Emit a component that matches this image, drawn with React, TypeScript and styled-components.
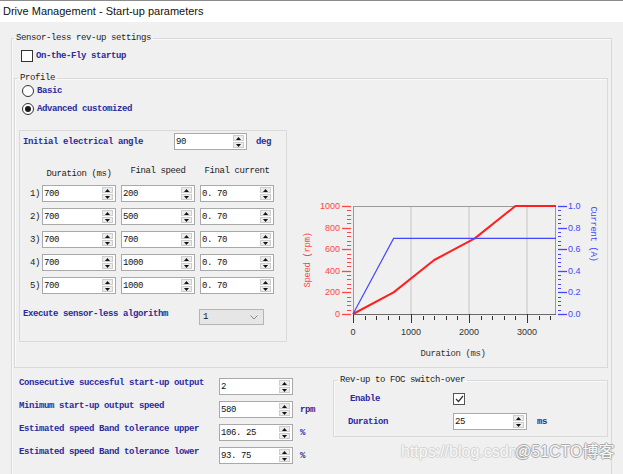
import React from "react";
import styled, { createGlobalStyle, css } from "styled-components";

///// CONSTANTS
const MONO = `"Liberation Mono", "DejaVu Sans Mono", monospace`;
const SANS = `"Liberation Sans", Arial, sans-serif`;
const BLUE = "#2b2b9e";
const INK = "#1c1c1c";
const ETCH = "#d9d9d9";
////////////

const GlobalStyle = createGlobalStyle`
  html, body {
    margin: 0;
    padding: 0;
    background: #f0f0f0;
  }
  #root {
    width: 623px;
    height: 474px;
    overflow: hidden;
  }
`;

const Window = styled.div`
  position: relative;
  width: 623px;
  height: 474px;
  overflow: hidden;
  background: #f0f0f0;
  font-family: ${MONO};
  font-size: 9px;
  letter-spacing: -0.4px;
  color: ${INK};
`;

const TitleBar = styled.div`
  height: 21px;
  border-top: 1px solid #8c8c8c;
  background: #fff;
  padding-left: 3px;
  font-family: ${SANS};
  font-size: 11px;
  letter-spacing: 0;
  line-height: 21px;
  color: #111;
`;

const groupBox = css`
  box-sizing: border-box;
  min-width: 0;
  margin: 0;
  padding: 0;
  border: 1px solid ${ETCH};
  box-shadow: inset 1px 1px 0 #fafafa;
`;

const Legend = styled.legend<{ $indent: number }>`
  margin-left: ${p => p.$indent}px;
  padding: 0 2px;
  height: 12px;
  line-height: 12px;
  color: ${INK};
`;

const OuterGroup = styled.fieldset`
  ${groupBox}
  margin: 10px 0 0 11px;
  width: 601px;
  min-height: 470px;
`;

const ProfileGroup = styled.fieldset`
  ${groupBox}
  margin: 10px 3px 0 2px;
  padding-bottom: 5px;
`;

const SwitchGroup = styled.fieldset`
  ${groupBox}
  margin: 6px 0 0 auto;
  width: 275px;
  padding: 7px 0 6px 0;
`;

const BlueText = styled.span`
  color: ${BLUE};
  font-weight: bold;
  line-height: 10px;
  white-space: pre;
`;

const CheckRow = styled.label`
  display: flex;
  align-items: center;
  gap: 3px;
  height: 12px;
  margin: 6px 0 0 9px;
`;

const Box = styled.span<{ $shade?: string }>`
  display: inline-flex;
  align-items: center;
  justify-content: center;
  flex: none;
  width: 12px;
  height: 12px;
  box-sizing: border-box;
  border: 1px solid ${p => p.$shade ?? "#333"};
  background: #fff;
`;

const RadioRow = styled.label<{ $top: number }>`
  display: flex;
  align-items: center;
  gap: 3px;
  height: 12px;
  margin: ${p => p.$top}px 0 0 7px;
`;

const RadioCircle = styled.span<{ $on?: boolean }>`
  display: inline-flex;
  align-items: center;
  justify-content: center;
  flex: none;
  width: 12px;
  height: 12px;
  box-sizing: border-box;
  border: 1px solid #333;
  border-radius: 50%;
  background: #fff;
  &::after {
    content: "";
    display: ${p => (p.$on ? "block" : "none")};
    width: 6px;
    height: 6px;
    border-radius: 50%;
    background: #1a1a1a;
  }
`;

const ContentRow = styled.div`
  display: flex;
  align-items: flex-start;
  margin: 15px 0 0 4px;
`;

const TableGroup = styled.div`
  flex: none;
  width: 268px;
  height: 212px;
  box-sizing: border-box;
  border: 1px solid ${ETCH};
  padding-top: 2px;
`;

const AngleRow = styled.div`
  display: flex;
  align-items: center;
  height: 17px;
`;

const FieldLabel = styled(BlueText)<{ $w: number; $pad?: number }>`
  flex: none;
  box-sizing: border-box;
  width: ${p => p.$w}px;
  padding-left: ${p => p.$pad ?? 0}px;
`;

const Unit = styled(BlueText)<{ $gap: number }>`
  margin-left: ${p => p.$gap}px;
`;

const StepGrid = styled.div`
  display: grid;
  grid-template-columns: 22px 79px 79px 74px;
  grid-auto-rows: 17px;
  grid-template-rows: 15px;
  row-gap: 6px;
  margin-top: 14px;
`;

const ColHead = styled.span<{ $low?: boolean }>`
  width: 74px;
  text-align: center;
  line-height: 10px;
  white-space: pre;
  align-self: ${p => (p.$low ? "end" : "start")};
  padding-top: ${p => (p.$low ? 0 : 2)}px;
`;

const RowNum = styled.span`
  align-self: center;
  text-align: right;
  padding-right: 2px;
  line-height: 10px;
`;

const ExecuteRow = styled.div`
  display: flex;
  align-items: flex-start;
  margin-top: 15px;
`;

const SelectBox = styled.div`
  display: flex;
  align-items: center;
  justify-content: space-between;
  width: 65px;
  height: 16px;
  box-sizing: border-box;
  border: 1px solid #b4b4b4;
  background: #e6e6e6;
  padding: 0 5px 0 3px;
  color: #111;
`;

const Field = styled.div<{ $w: number; $h?: number }>`
  display: flex;
  flex: none;
  width: ${p => p.$w}px;
  height: ${p => p.$h ?? 17}px;
  box-sizing: border-box;
  border: 1px solid #a9a9a9;
  background: #fff;
`;

const FieldValue = styled.span`
  flex: 1;
  padding-left: 1px;
  display: flex;
  align-items: center;
  color: #111;
  white-space: pre;
`;

const Spinner = styled.span`
  display: flex;
  flex-direction: column;
  gap: 1px;
  width: 11px;
  margin: 1px 2px 1px 0;
`;

const SpinButton = styled.span`
  flex: 1;
  display: flex;
  align-items: center;
  justify-content: center;
  background: #ececec;
  border: 1px solid #cdcdcd;
`;

const ChartSvg = styled.svg`
  flex: none;
  margin-left: 6px;
  font-family: ${SANS};
  font-size: 9px;
  letter-spacing: 0;
  .title {
    font-family: ${MONO};
    letter-spacing: -0.4px;
  }
`;

const BottomRow = styled.div`
  display: flex;
  align-items: flex-start;
  margin: 0 3px 0 7px;
`;

const ParamList = styled.div`
  display: flex;
  flex-direction: column;
  gap: 6px;
  margin-top: 10px;
`;

const ParamRow = styled.div`
  display: flex;
  align-items: flex-start;
  height: 17px;
  ${Unit} {
    align-self: center;
  }
`;

const SwitchRow = styled.div<{ $top?: number }>`
  display: flex;
  align-items: center;
  margin-top: ${p => p.$top ?? 0}px;
`;

const Watermark = styled.div`
  position: absolute;
  left: 401px;
  top: 441px;
  width: 222px;
  height: 24px;
  font-family: ${SANS}, "Noto Sans CJK SC", sans-serif;
  letter-spacing: 0;
  pointer-events: none;
`;

const MarkText = styled.span<{ $x: number; $edge: string }>`
  position: absolute;
  left: ${p => p.$x}px;
  top: 0;
  font-size: 16px;
  line-height: 22px;
  white-space: nowrap;
  color: #f7f7f7;
  text-shadow: -1px 0 ${p => p.$edge}, 1px 0 ${p => p.$edge},
    0 -1px ${p => p.$edge}, 0 1px ${p => p.$edge};
`;

///// PIECES
const Arrow = ({ up }: { up?: boolean }) => (
  <svg width="5" height="3" viewBox="0 0 5 3">
    <polygon points={up ? "2.5,0 5,3 0,3" : "0,0 5,0 2.5,3"} fill="#111" />
  </svg>
);

const SpinBox = ({ value, w = 74, h }: { value: string; w?: number; h?: number }) => (
  <Field $w={w} $h={h}>
    <FieldValue>{value}</FieldValue>
    <Spinner>
      <SpinButton>
        <Arrow up />
      </SpinButton>
      <SpinButton>
        <Arrow />
      </SpinButton>
    </Spinner>
  </Field>
);

const steps = [
  { dur: "700", speed: "200", current: "0. 70" },
  { dur: "700", speed: "500", current: "0. 70" },
  { dur: "700", speed: "700", current: "0. 70" },
  { dur: "700", speed: "1000", current: "0. 70" },
  { dur: "700", speed: "1000", current: "0. 70" },
];

const PX0 = 60;
const PY0 = 184;
const PX1 = 263;
const PY1 = 76;
const xOf = (ms: number) => PX0 + ms * 0.058;
const ySpeed = (v: number) => PY0 - v * 0.108;
const yCur = (c: number) => PY0 - c * 108;

const speedPts = [
  [0, 0],
  [700, 200],
  [1400, 500],
  [2100, 700],
  [2800, 1000],
  [3500, 1000],
]
  .map(([t, v]) => `${xOf(t)},${ySpeed(v)}`)
  .join(" ");

const currentPts = [
  [0, 0],
  [700, 0.7],
  [3500, 0.7],
]
  .map(([t, c]) => `${xOf(t)},${yCur(c)}`)
  .join(" ");

const RED = "#ff4646";
const CUR = "#4646ff";

const RampChart = () => {
  const ticks26 = Array.from({ length: 26 }, (_, i) => i);
  const xticks = Array.from({ length: 18 }, (_, i) => i);
  return (
    <ChartSvg width="310" height="232" viewBox="0 0 310 232">
      {[1000, 2000, 3000].map(ms => (
        <line key={ms} x1={xOf(ms)} y1={PY1} x2={xOf(ms)} y2={PY0} stroke="#c6c6c6" />
      ))}
      <line x1={PX0} y1={PY1 + 0.5} x2={PX1} y2={PY1 + 0.5} stroke="#9a9a9a" />
      <line x1={PX1 - 0.5} y1={PY1} x2={PX1 - 0.5} y2={PY0} stroke="#9a9a9a" />
      <line x1={PX0 + 0.5} y1={PY1} x2={PX0 + 0.5} y2={PY0} stroke="#9a9a9a" />
      <line x1={PX0} y1={PY0 + 0.5} x2={PX1} y2={PY0 + 0.5} stroke="#6a6a6a" />

      {ticks26.map(i => {
        const y = Math.round(ySpeed(i * 40)) + 0.5;
        const major = i % 5 === 0;
        return (
          <line key={"l" + i} x1={major ? 49 : 54} y1={y} x2={58} y2={y} stroke={RED} strokeWidth={major ? 1.3 : 1} />
        );
      })}
      {ticks26.map(i => {
        const y = Math.round(yCur(i * 0.04)) + 0.5;
        const major = i % 5 === 0;
        return (
          <line key={"r" + i} x1={265} y1={y} x2={major ? 274 : 268} y2={y} stroke={CUR} strokeWidth={major ? 1.3 : 1} />
        );
      })}
      {xticks.map(i => {
        const x = Math.round(xOf(i * 200)) + 0.5;
        const major = i % 5 === 0;
        return (
          <line key={"x" + i} x1={x} y1={major ? 184 : 186} x2={x} y2={major ? 193 : 190} stroke="#333" />
        );
      })}

      {[0, 200, 400, 600, 800, 1000].map(v => (
        <text key={"sl" + v} x={47} y={ySpeed(v) + 3} textAnchor="end" fill={RED}>
          {v}
        </text>
      ))}
      {[0, 0.2, 0.4, 0.6, 0.8, 1].map(c => (
        <text key={"cl" + c} x={275} y={yCur(c) + 3} fill={CUR}>
          {c.toFixed(1)}
        </text>
      ))}
      {[0, 1000, 2000, 3000].map(ms => (
        <text key={"xl" + ms} x={xOf(ms)} y={205} textAnchor="middle" fill="#333">
          {ms}
        </text>
      ))}

      <polyline points={speedPts} fill="none" stroke="#ff1f1f" strokeWidth="2" strokeLinejoin="round" />
      <polyline points={currentPts} fill="none" stroke={CUR} strokeWidth="1.2" />

      <text className="title" x={14} y={130} fill={RED} textAnchor="middle" transform="rotate(-90 14 130)" dy="3">
        Speed (rpm)
      </text>
      <text className="title" x={301} y={104} fill={CUR} textAnchor="middle" transform="rotate(90 301 104)" dy="3">
        Current (A)
      </text>
      <text className="title" x={160} y={226} fill="#333" textAnchor="middle">
        Duration (ms)
      </text>
    </ChartSvg>
  );
};

const Check = () => (
  <svg width="9" height="8" viewBox="0 0 9 8">
    <polyline points="1,4 3.5,6.5 8,1" fill="none" stroke="#333" strokeWidth="1.2" />
  </svg>
);

const Chevron = () => (
  <svg width="8" height="5" viewBox="0 0 8 5">
    <polyline points="0.5,0.5 4,4 7.5,0.5" fill="none" stroke="#8a8a8a" />
  </svg>
);

const params = [
  { label: "Consecutive succesful start-up output", value: "2", unit: "" },
  { label: "Minimum start-up output speed", value: "580", unit: "rpm" },
  { label: "Estimated speed Band tolerance upper", value: "106. 25", unit: "%" },
  { label: "Estimated speed Band tolerance lower", value: "93. 75", unit: "%" },
];

export default function App() {
  return (
    <Window>
      <GlobalStyle />
      <TitleBar>Drive Management - Start-up parameters</TitleBar>

      <OuterGroup>
        <Legend $indent={2}>Sensor-less rev-up settings</Legend>
        <CheckRow>
          <Box />
          <BlueText>On-the-Fly startup</BlueText>
        </CheckRow>

        <ProfileGroup>
          <Legend $indent={3}>Profile</Legend>
          <RadioRow $top={1}>
            <RadioCircle />
            <BlueText>Basic</BlueText>
          </RadioRow>
          <RadioRow $top={6}>
            <RadioCircle $on />
            <BlueText>Advanced customized</BlueText>
          </RadioRow>

          <ContentRow>
            <TableGroup>
              <AngleRow>
                <FieldLabel $w={154} $pad={3}>
                  Initial electrical angle
                </FieldLabel>
                <SpinBox value="90" w={73} />
                <Unit $gap={9}>deg</Unit>
              </AngleRow>

              <StepGrid>
                <span />
                <ColHead $low>Duration (ms)</ColHead>
                <ColHead>Final speed</ColHead>
                <ColHead>Final current</ColHead>
                {steps.map((s, i) => (
                  <React.Fragment key={i}>
                    <RowNum>{i + 1})</RowNum>
                    <SpinBox value={s.dur} />
                    <SpinBox value={s.speed} />
                    <SpinBox value={s.current} />
                  </React.Fragment>
                ))}
              </StepGrid>

              <ExecuteRow>
                <FieldLabel $w={179} $pad={3}>
                  Execute sensor-less algorithm
                </FieldLabel>
                <SelectBox>
                  <span>1</span>
                  <Chevron />
                </SelectBox>
              </ExecuteRow>
            </TableGroup>

            <RampChart />
          </ContentRow>
        </ProfileGroup>

        <BottomRow>
          <ParamList>
            {params.map(p => (
              <ParamRow key={p.label}>
                <FieldLabel $w={200}>{p.label}</FieldLabel>
                <SpinBox value={p.value} />
                {p.unit && <Unit $gap={7}>{p.unit}</Unit>}
              </ParamRow>
            ))}
          </ParamList>

          <SwitchGroup>
            <Legend $indent={4}>Rev-up to FOC switch-over</Legend>
            <SwitchRow>
              <FieldLabel $w={119} $pad={16}>
                Enable
              </FieldLabel>
              <Box $shade="#555">
                <Check />
              </Box>
            </SwitchRow>
            <SwitchRow $top={8}>
              <FieldLabel $w={119} $pad={14}>
                Duration
              </FieldLabel>
              <SpinBox value="25" />
              <Unit $gap={10}>ms</Unit>
            </SwitchRow>
          </SwitchGroup>
        </BottomRow>
      </OuterGroup>

      <Watermark>
        <MarkText $x={0} $edge="#d4d4d4">
          https://blog.csdn
        </MarkText>
        <MarkText $x={114} $edge="#ababab">
          @51CTO博客
        </MarkText>
      </Watermark>
    </Window>
  );
}
